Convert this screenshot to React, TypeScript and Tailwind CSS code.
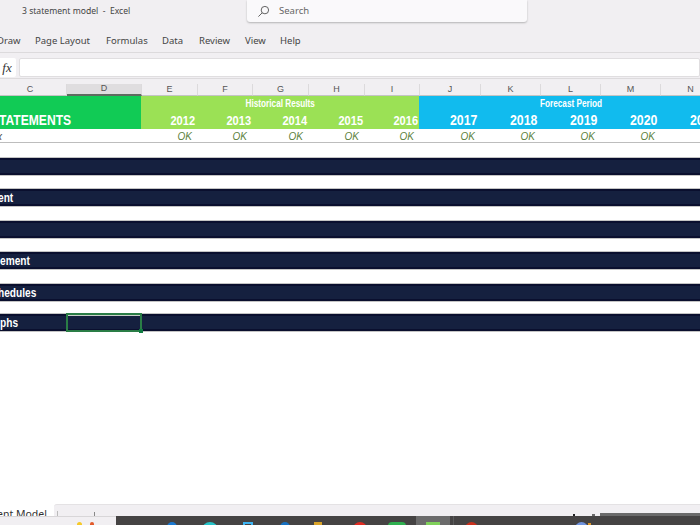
const bars = [
  { mt: "mt-[15px]", label: "", ml: "" },
  { mt: "mt-[14px]", label: "ent", ml: "ml-[-2px]" },
  { mt: "mt-[15px]", label: "", ml: "" },
  { mt: "mt-[14px]", label: "ement", ml: "" },
  { mt: "mt-[15px]", label: "hedules", ml: "ml-[-2px]" },
  { mt: "mt-[13px]", label: "phs", ml: "" },
];

const cols = [
  { l: "C", w: "w-[68px] pr-[5px]" },
  { l: "D", w: "w-[75px]", active: true },
  { l: "E", w: "w-[56px]" },
  { l: "F", w: "w-[55px]" },
  { l: "G", w: "w-[56px]" },
  { l: "H", w: "w-[56px]" },
  { l: "I", w: "w-[55px]" },
  { l: "J", w: "w-[61px]" },
  { l: "K", w: "w-[60px]" },
  { l: "L", w: "w-[60px]" },
  { l: "M", w: "w-[60px]" },
  { l: "N", w: "w-[60px]" },
];

const menu = [
  { t: "Draw", w: "w-[38px]" },
  { t: "Page Layout", w: "w-[71px]" },
  { t: "Formulas", w: "w-[56px]" },
  { t: "Data", w: "w-[37px]" },
  { t: "Review", w: "w-[46px]" },
  { t: "View", w: "w-[35px]" },
  { t: "Help", w: "w-[30px]" },
];

const hist = [
  { y: 2012, w: "w-[56px]" },
  { y: 2013, w: "w-[55px]" },
  { y: 2014, w: "w-[56px]" },
  { y: 2015, w: "w-[56px]" },
  { y: 2016, w: "w-[55px]" },
];
const fore = [2017, 2018, 2019, 2020];

const tray = [
  "ml-[51px] w-[10px] h-[10px] bg-[#1a78d0] rounded-full",
  "ml-[25px] w-[16px] h-[16px] bg-[#25c3c8] rounded-full",
  "ml-[25px] w-[10px] h-[10px] border-2 border-[#3db4f2]",
  "ml-[27px] w-[10px] h-[10px] bg-[#1670c0] rounded-full",
  "ml-[24px] w-[8px] h-[10px] bg-[#d9a328]",
  "ml-[31px] w-[14px] h-[14px] bg-[#e02b20] rounded-full",
  "ml-[21px] w-[18px] h-[10px] bg-[#2eb04f] rounded-sm",
];

export default function App() {
  return (
    <div className="flex flex-col w-[700px] h-[525px] overflow-hidden bg-white font-['Liberation_Sans',Arial,sans-serif]">
      <div className="h-[53px] shrink-0 bg-[#f1eff2] border-b border-[#dcdadc]">
        <div className="flex items-start h-[22px]">
          <div className="w-[247px] h-[22px] flex items-center pl-[22px] text-[8.6px] text-[#444] font-['Noto_Sans',sans-serif]">
            3 statement model&nbsp; -&nbsp; Excel
          </div>
          <div className="w-[280px] h-[22px] bg-[#faf9fb] rounded-b-[3px] shadow-[0_1px_2px_rgba(0,0,0,0.25)] flex items-center pl-[10px] gap-[9px] text-[9.5px] text-[#666] font-['Noto_Sans',sans-serif]">
            <svg width="13" height="13" viewBox="0 0 14 14" fill="none" stroke="#555" strokeWidth="1">
              <circle cx="8.5" cy="5.5" r="4" />
              <path d="M5.5 8.5L1.5 12.5" />
            </svg>
            Search
          </div>
        </div>
        <div className="flex items-center h-[38px] text-[9.5px] text-[#444] font-['Noto_Sans',sans-serif] ml-[-3px]">
          {menu.map((m) => (
            <span key={m.t} className={`shrink-0 ${m.w}`}>
              {m.t}
            </span>
          ))}
        </div>
      </div>
      <div className="h-[25px] shrink-0 bg-[#f1eff2] flex items-start pt-[5px]">
        <div className="ml-[-2px] w-[18px] h-[19px] bg-white rounded-[2px] flex items-center justify-center italic text-[13px] font-['Liberation_Serif',serif] text-[#333]">
          fx
        </div>
        <div className="ml-[3px] flex-1 h-[19px] bg-white border border-[#e0dee0] rounded-[2px]" />
      </div>
      <div className="h-[18px] shrink-0 pt-[5px] bg-[#f1eff2] flex border-t border-[#dddbdd] ml-[-1px] w-[720px]">
        {cols.map((c) => (
          <div
            key={c.l}
            className={`shrink-0 flex items-center justify-center text-[9px] text-[#555] border-r border-[#dcdadc] ${c.w} ${c.active ? "bg-[#dfdddf] border-b-2 border-b-[#5f6b60]" : "border-b border-b-[#c4c4c4]"}`}
          >
            {c.l}
          </div>
        ))}
      </div>
      <div className="flex h-[33px] shrink-0 text-white font-bold">
        <div className="w-[141px] bg-[#11cb55] flex items-end text-[15.5px] leading-[18px] overflow-hidden">
          <span className="ml-[-1px] whitespace-nowrap origin-left scale-x-[0.78]">TATEMENTS</span>
        </div>
        <div className="w-[278px] bg-[#9be155] flex flex-col">
          <div className="text-[10px] h-[15px] leading-[15px] text-center whitespace-nowrap">
            <span className="inline-block scale-x-[0.82]">Historical Results</span>
          </div>
          <div className="flex text-[13.5px] leading-[18px] pt-[1px]">
            {hist.map((h, i) => (
              <div key={h.y} className={`text-right shrink-0 ${i === 0 ? "pr-[2px]" : "pr-[1px]"} ${h.w}`}>
                <span className="inline-block origin-right scale-x-[0.82]">{h.y}</span>
              </div>
            ))}
          </div>
        </div>
        <div className="flex-1 bg-[#11bbee] flex flex-col overflow-hidden">
          <div className="text-[10px] h-[15px] leading-[15px] pl-[121px] whitespace-nowrap">
            <span className="inline-block origin-left scale-x-[0.82]">Forecast Period</span>
          </div>
          <div className="flex text-[15px] leading-[18px] w-[321px]">
            <div className="w-[1px] shrink-0" />
            {[...fore, 2021].map((y) => (
              <div key={y} className="w-[60px] shrink-0 text-right pr-[3px]">
                <span className="inline-block origin-right scale-x-[0.82]">{y}</span>
              </div>
            ))}
          </div>
        </div>
      </div>
      <div className="flex h-[14px] shrink-0 border-b border-[#bdbdbd] items-center pt-[1px] italic text-[10px] text-[#5b7f3c]">
        <span className="w-[141px] text-[#444] ml-[-3px] mr-[3px]">x</span>
        {hist.map((h) => (
          <div key={h.y} className={`text-right pr-[5px] shrink-0 ${h.w}`}>OK</div>
        ))}
        {fore.map((y, i) => (
          <div key={y} className={`text-right pr-[5px] shrink-0 ${i === 0 ? "w-[61px]" : "w-[60px]"}`}>OK</div>
        ))}
      </div>
      <div className="flex-1">
        {bars.map((b, i) => (
          <div
            key={i}
            className={`flex h-[17px] bg-[#15203f] border-t-2 border-b-2 border-[#0a0f2e] shadow-[0_1px_0_#c4c4c4,0_-1px_0_#c4c4c4] relative text-white font-bold text-[13px] leading-[13px] whitespace-nowrap ${b.mt}`}
          >
            <span className={`inline-block origin-left scale-x-[0.78] ${b.ml}`}>{b.label}</span>
            {i === 5 && (
              <div className="absolute left-[66px] top-[-3px] w-[76px] h-[19px] border-2 border-[#2a7d46]">
                <div className="h-[1px] bg-[#c9cfc9]" />
                <div className="absolute right-[-3px] bottom-[-3px] w-[4px] h-[4px] bg-[#107c41]" />
              </div>
            )}
          </div>
        ))}
      </div>
      <div className="flex h-[12px] shrink-0 overflow-hidden">
        <div className="w-[54px] shrink-0 ml-[-3px] pt-[3px] text-[10.5px] text-[#333] font-['Noto_Sans',sans-serif] leading-[14px] whitespace-nowrap">ent Model</div>
        <div className="flex-1 bg-[#f1eff2] rounded-tl-[3px] border-t border-[#e4e2e4] flex items-end ml-[3px]">
          <div className="ml-[3px] w-[1px] h-[5px] bg-[#bbb]" />
          <div className="ml-[36px] w-[1px] h-[4px] bg-[#888]" />
          <div className="ml-[478px] w-[2px] h-[2px] bg-[#222]" />
          <div className="ml-[17px] w-[3px] h-[2px] bg-[#6a6a6a]" />
          <div className="ml-[5px] flex-1 h-[3px] bg-[#6a6a6a]" />
        </div>
      </div>
      <div className="flex h-[9px] shrink-0 overflow-hidden">
        <div className="w-[116px] shrink-0 bg-[#f1eff2] border-t border-[#d8d6d8] flex items-start pt-[5px]">
          <div className="ml-[77px] w-[5px] h-[5px] shrink-0 bg-[#f6c928] rounded-full" />
          <div className="ml-[8px] w-[4px] h-[5px] shrink-0 bg-[#e25a2b] rounded-full" />
        </div>
        <div className="flex-1 bg-[#454343] flex items-start">
          {tray.map((c) => (
            <div key={c} className={`mt-[6px] shrink-0 ${c}`} />
          ))}
          <div className="ml-[10px] w-[34px] h-[9px] shrink-0 bg-[#6b6b6b] flex justify-center">
            <div className="mt-[6px] w-[14px] h-[10px] bg-[#7fd05a]" />
          </div>
          <div className="ml-[3px] w-[1px] h-[9px] shrink-0 bg-[#5a5a5a]" />
          <div className="ml-[11px] mt-[6px] w-[13px] h-[13px] shrink-0 bg-[#c9301c] rounded-full" />
          <div className="ml-[97px] mt-[6px] w-[13px] h-[13px] shrink-0 bg-[#6f93de] rounded-full" />
          <div className="mt-[7px] w-[3px] h-[3px] shrink-0 bg-[#e0982a]" />
        </div>
      </div>
    </div>
  );
}
